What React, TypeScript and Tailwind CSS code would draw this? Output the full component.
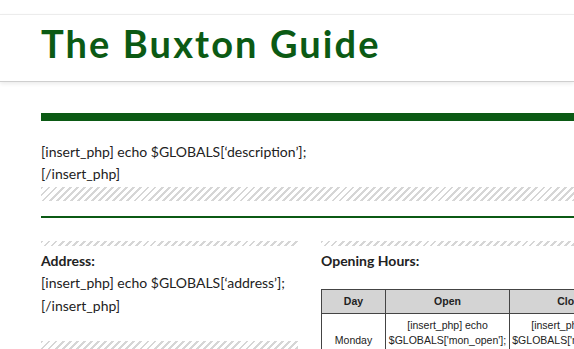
const hatch =
  "bg-[repeating-linear-gradient(135deg,#d6d6d6_0px,#d6d6d6_2px,transparent_2px,transparent_5px)]";

const hours = [{ day: "Monday", key: "mon" }];

export default function App() {
  return (
    <div className="min-h-screen w-full overflow-hidden bg-white font-['Lato',sans-serif] text-[#222]">
      <header className="mt-[14px] h-[68px] border-t border-b border-t-[#ececec] border-b-[#cfcfcf] bg-white shadow-[0_2px_4px_rgba(0,0,0,0.08)]">
        <h1 className="pl-[41px] pt-[6px] text-[38px] leading-[44px] font-bold tracking-[2.1px] text-[#0b5a14]">
          The Buxton Guide
        </h1>
      </header>

      <main className="ml-[41px] w-[900px] pt-[31px]">
        <div className="h-[8px] bg-[#0b5a14]" />
        <div className="pt-[20px] text-[14px] leading-[22px]">
          <p>[insert_php] echo $GLOBALS[‘description’];</p>
          <p>[/insert_php]</p>
        </div>
        <div className={`mt-[2px] h-[14px] ${hatch}`} />
        <div className="mt-[15px] h-[2px] bg-[#0b5a14]" />

        <div className="mt-[23px] flex gap-[23px]">
          <section className="w-[257px] shrink-0">
            <div className={`h-[5px] ${hatch}`} />
            <h2 className="pt-[5px] text-[14px] leading-[20px] font-bold">Address:</h2>
            <div className="text-[14px] leading-[23px]">
              <p>[insert_php] echo $GLOBALS[‘address’];</p>
              <p>[/insert_php]</p>
            </div>
            <div className={`mt-[24px] h-[10px] ${hatch}`} />
          </section>

          <section className="flex-1">
            <div className={`h-[5px] ${hatch}`} />
            <h2 className="pt-[5px] text-[14px] leading-[20px] font-bold">Opening Hours:</h2>
            <table className="mt-[18px] border-collapse font-['Liberation_Sans',Arial,sans-serif] text-[10.5px] text-[#222]">
              <thead>
                <tr className="h-[24px] bg-[#d4d4d4]">
                  <th className="w-[64px] border border-[#444] font-bold">Day</th>
                  <th className="w-[124px] border border-[#444] font-bold">Open</th>
                  <th className="w-[124px] border border-[#444] font-bold">Close</th>
                </tr>
              </thead>
              <tbody>
                {hours.map((h) => (
                  <tr key={h.key}>
                    <td className="border border-[#444] py-[4px] text-center leading-[15px]">{h.day}</td>
                    <td className="border border-[#444] py-[4px] text-center leading-[15px]">
                      [insert_php] echo
                      <br />
                      $GLOBALS['{h.key}_open'];
                      <br />
                      [/insert_php]
                    </td>
                    <td className="border border-[#444] py-[4px] text-center leading-[15px]">
                      [insert_php] echo
                      <br />
                      $GLOBALS['{h.key}_close'];
                      <br />
                      [/insert_php]
                    </td>
                  </tr>
                ))}
              </tbody>
            </table>
          </section>
        </div>
      </main>
    </div>
  );
}
